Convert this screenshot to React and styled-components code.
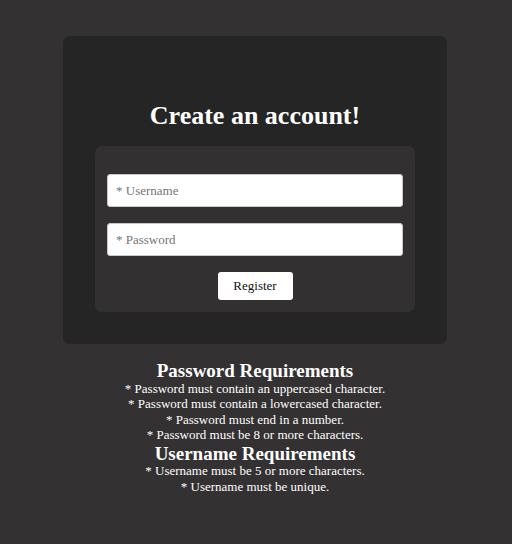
import React from 'react'
import styled, { createGlobalStyle } from 'styled-components'

const Global = createGlobalStyle`
  html, body {
    margin: 0;
    background: #333132;
    font-family: "Liberation Serif", "Times New Roman", serif;
  }
`

const Page = styled.div`
  min-height: 544px;
  display: flex;
  flex-direction: column;
  align-items: center;
  padding: 36px 2px 0 0;
  box-sizing: border-box;
`

const Card = styled.div`
  width: 384px;
  height: 308px;
  box-sizing: border-box;
  background: #252525;
  border-radius: 7px;
  display: flex;
  flex-direction: column;
  align-items: center;
  padding-top: 65px;
`

const Title = styled.h1`
  margin: 0 0 15px;
  color: #fff;
  font-family: "Liberation Serif", "Times New Roman", serif;
  font-size: 26px;
  line-height: 30px;
  font-weight: bold;
`

const Form = styled.form`
  width: 320px;
  box-sizing: border-box;
  background: #323031;
  border-radius: 7px;
  padding: 28px 12px 12px;
  display: flex;
  flex-direction: column;
  align-items: center;
  gap: 16px;
`

const Input = styled.input`
  width: 100%;
  height: 33px;
  box-sizing: border-box;
  border: 1px solid #c8c8c8;
  border-radius: 3px;
  background: #fff;
  padding: 0 8px;
  font-family: "Liberation Serif", "Times New Roman", serif;
  font-size: 13px;
  outline: none;
  &::placeholder {
    color: #757575;
  }
`

const Button = styled.button`
  width: 75px;
  height: 28px;
  border: none;
  border-radius: 3px;
  background: #fff;
  color: #111;
  font-family: "Liberation Serif", "Times New Roman", serif;
  font-size: 13px;
  cursor: pointer;
`

const Requirements = styled.div`
  margin-top: 18px;
  text-align: center;
  color: #fff;
  font-family: "Liberation Serif", "Times New Roman", serif;
`

const Heading = styled.h3`
  margin: 0;
  font-size: 19px;
  line-height: 18.5px;
  font-weight: bold;
  p + & {
    margin-top: 2px;
  }
`

const Rule = styled.p`
  margin: 0;
  font-size: 13px;
  line-height: 15.5px;
`

const passwordRules = [
  '* Password must contain an uppercased character.',
  '* Password must contain a lowercased character.',
  '* Password must end in a number.',
  '* Password must be 8 or more characters.',
]

const usernameRules = [
  '* Username must be 5 or more characters.',
  '* Username must be unique.',
]

export default function App() {
  return (
    <>
      <Global />
      <Page>
        <Card>
          <Title>Create an account!</Title>
          <Form onSubmit={(e) => e.preventDefault()}>
            <Input type="text" placeholder="* Username" />
            <Input type="password" placeholder="* Password" />
            <Button type="submit">Register</Button>
          </Form>
        </Card>
        <Requirements>
          <Heading>Password Requirements</Heading>
          {passwordRules.map((r) => <Rule key={r}>{r}</Rule>)}
          <Heading>Username Requirements</Heading>
          {usernameRules.map((r) => <Rule key={r}>{r}</Rule>)}
        </Requirements>
      </Page>
    </>
  )
}
